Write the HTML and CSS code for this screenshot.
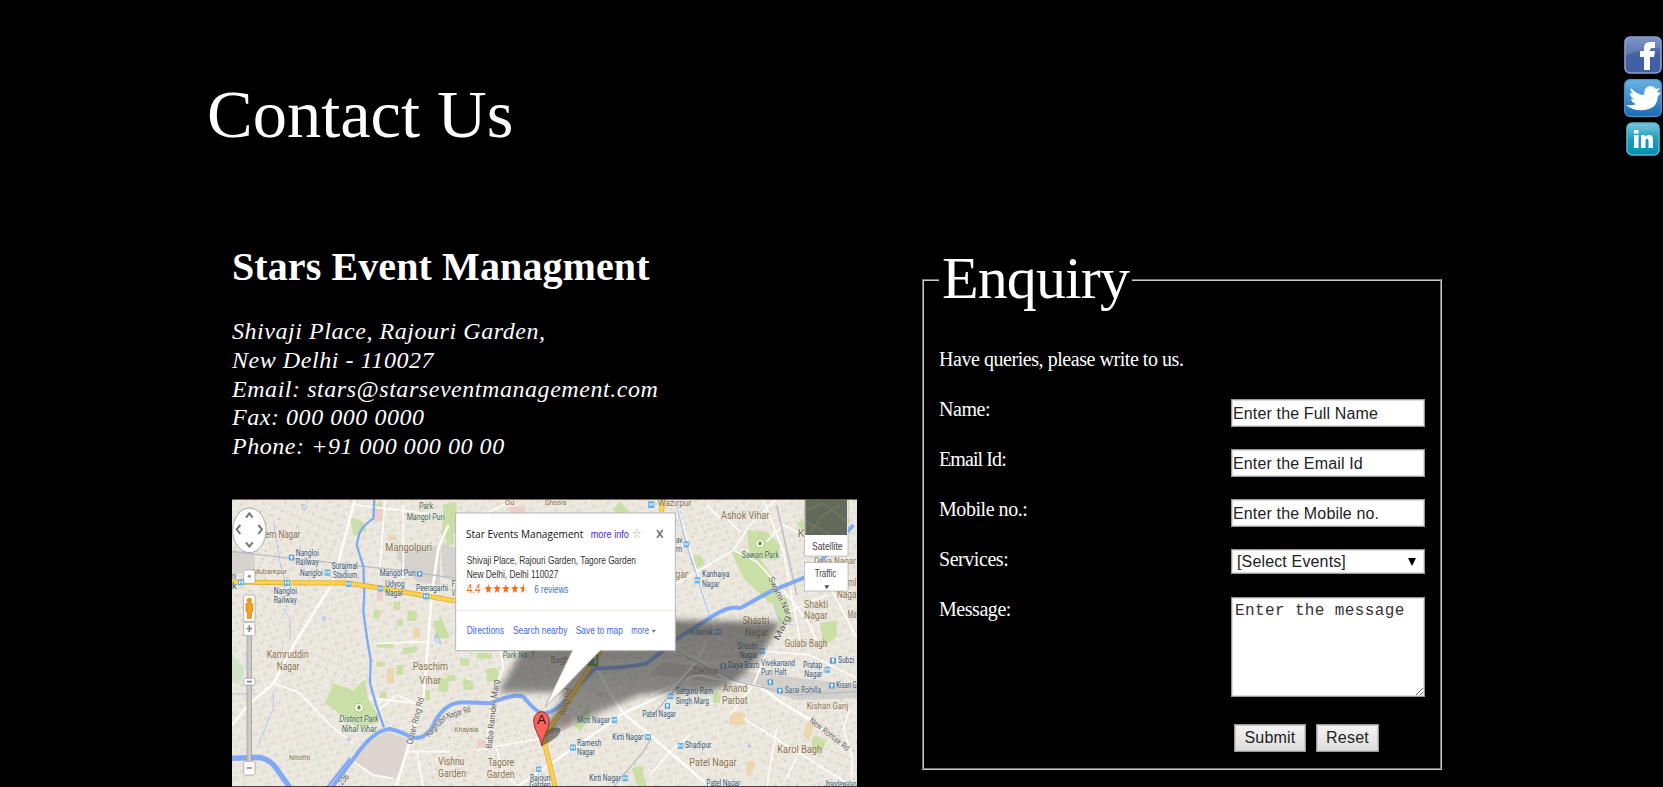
FILE: index.html
```html
<!DOCTYPE html>
<html lang="en">
<head>
<meta charset="utf-8">
<title>Contact Us</title>
<link rel="stylesheet" href="styles.css">
</head>
<body>
<div class="page">
<main class="main">
  <h1 class="title">Contact Us</h1>
  <div class="columns">
    <section class="contact">
      <h2 class="company">Stars Event Managment</h2>
      <address class="address">Shivaji Place, Rajouri Garden,<br>New Delhi - 110027<br>Email: stars@starseventmanagement.com<br>Fax: 000 000 0000<br>Phone: +91 000 000 00 00</address>
      <svg class="map" viewBox="6 12 1875 864" preserveAspectRatio="none">
        <defs>
          <pattern id="blocks" width="46" height="38" patternUnits="userSpaceOnUse" patternTransform="rotate(-14)">
            <path d="M0 6H46M0 24H30M8 0V38M27 6V38M38 0V24" stroke="#f2efe7" stroke-width="2.5" fill="none"/>
            <path d="M12 10h11v9H12zM30 27h12v8H30z" fill="#e2ddd2"/>
          </pattern>
          <pattern id="dense" width="30" height="26" patternUnits="userSpaceOnUse" patternTransform="rotate(22)">
            <path d="M0 5H30M0 17H30M6 0V26M19 0V17" stroke="#edeae2" stroke-width="2.5" fill="none"/>
            <path d="M9 8h8v7H9z" fill="#dad5ca"/>
          </pattern>
          <linearGradient id="shade" x1="0" x2="0" y1="0" y2="1"><stop offset="0" stop-color="#3a3a3a" stop-opacity=".66"/><stop offset="1" stop-color="#3a3a3a" stop-opacity=".5"/></linearGradient>
          <filter id="soft" x="-10%" y="-20%" width="120%" height="140%"><feGaussianBlur stdDeviation="9"/></filter>
          <symbol id="metro" viewBox="0 0 20 20"><rect width="20" height="20" rx="3" fill="#5fb0ea"/><path d="M5 15V5l5 6 5-6v10" stroke="#fff" stroke-width="2.6" fill="none"/></symbol>
          <symbol id="rail" viewBox="0 0 20 20"><rect width="20" height="20" rx="3" fill="#4b9ade"/><rect x="6" y="3" width="8" height="11" rx="2" fill="#fff"/><path d="M7 17h6" stroke="#fff" stroke-width="2"/></symbol>
          <symbol id="park" viewBox="0 0 28 28"><circle cx="14" cy="14" r="13" fill="#fff" stroke="#7a9c5b" stroke-width="1.5"/><path d="M14 6c7 6 7 13 0 13s-7-7 0-13zM13 18h2v4h-2z" fill="#5ba416"/></symbol>
        </defs>
        <rect x="6" y="12" width="1875" height="864" fill="#e9e5dc"/>
        <rect x="6" y="12" width="1875" height="864" fill="url(#blocks)"/>
        <path d="M6 12H370L330 260 200 435 6 500ZM150 470 400 440 420 560 300 570 280 630 330 700 220 640 160 600ZM630 700H940V876H600ZM1300 30 1600 30 1500 230 1350 330ZM1600 650 1881 600V876H1590Z" fill="url(#dense)"/>
        <path d="M6 165 75 175V225L6 240ZM500 165 630 150V270L560 260 500 190ZM630 140 677 160V260L640 250Z" fill="#d6d3ce"/>
        <path d="M360 800 400 750 470 710 540 735 500 850 430 840Z" fill="#dcd5d0"/>
        <path d="M1300 500 1881 570V610L1700 615 1560 570 1260 540Z" fill="#c9c7c4" opacity=".7"/>
        <g fill="#c9dfa6">
          <path d="M310 565 370 585 405 553 415 615 445 660 440 685 380 695 285 625Z"/>
          <path d="M360 65 400 80 410 105 370 125ZM430 30 455 20 460 45 430 60Z"/>
          <path d="M490 320h20v25h-20zM535 345l25 5v28h-30zM430 345h20v25h-20zM610 380l25-10 25 60h-40zM500 375h18v18h-18zM440 440h50v18h-50zM520 460l40-8v18l-40 10zM440 500h25v15h-25zM500 510h20v30h-20zM575 580l25 5v30h-25zM625 550h30v40h-30zM450 590h20v20h-20z"/>
          <path d="M640 30l40-10v90l-45 30zM650 120h22v30h-22zM690 490h28v22h-28zM740 475h45v16h-45zM770 520h35v40h-35zM700 550l30 10v25h-30zM650 540h25v18h-25zM1150 40l20-20 30 30-40 8z"/>
          <path d="M1500 160 1590 190 1650 280 1625 330 1540 250ZM1550 105 1610 110 1650 150 1640 195 1560 190ZM1625 300 1670 310 1690 380 1650 390ZM1380 190l30-12 15 30-30 14zM1770 385l50-10v50l-40 30zM1700 85l20-10 30 60-20-10zM1300 265l35-15v30l-35 25zM1750 720l38 15-15 45-30-20z"/>
          <path d="M1450 590l20 6v28h-20zM1030 690l45-60 5 35-30 45zM1205 820l30-8 15 64h-28zM830 440l90 10v15h-90z"/>
        </g>
        <path d="M6 480 45 520 30 570 6 555Z" fill="#cfe3cb"/>
        <g fill="#edcfcb"><path d="M432 40h30v38h-30zM440 290l18-8v35h-18zM740 735h28v25h-28zM995 665l25-12 5 40-30 15zM840 35h45v30h-45zM1100 590h35v15h-35z"/></g>
        <g fill="#edd6ad"><path d="M475 120h25v15h-25zM550 395l20 8v25h-20zM470 520h22v45h-22zM1300 130l30 8-8 22-25-5zM1500 650l45 5v35h-45zM1555 795l22 8-15 40-15-8zM1730 680l22 14-15 40-18-12z"/></g>
        <g class="street">
          <path d="M6 690 60 625 130 565 200 435 310 260 375 12" class="wide"/>
          <path d="M130 565 210 595 300 690 370 745M440 650 500 600 560 625M420 610 570 625M355 790 430 840 490 850"/>
          <path d="M655 90 625 160 605 300 595 430 580 610 545 720 500 870" class="wide"/>
          <path d="M440 630 460 610M380 30 630 60M520 30V250M465 12 450 220M600 440 440 445M530 770H660M560 770 580 876"/>
          <path d="M700 80 760 60 830 25M810 450 820 520 790 590 775 700 770 765M740 765 930 730 1000 710M800 760 820 840 870 876"/>
          <path d="M860 876 1000 780 1110 705 1180 655 1320 590 1400 500 1430 440" class="wide"/>
          <path d="M1100 520 1150 610 1180 655 1260 720 1440 876" class="wide"/>
          <path d="M1260 600 1400 540 1500 560 1590 575 1650 620 1750 680 1850 770M1260 450 1400 490 1500 560" class="wide"/>
          <path d="M1340 30 1445 380 1470 435M1260 300 1350 260 1510 165 1560 90 1640 12"/>
          <path d="M1510 165 1580 200 1680 310 1740 390 1760 440M1610 140 1660 90 1720 120 1881 430M1600 12 1660 170 1710 435M1680 350 1740 320 1790 300M1480 60 1530 110M1430 30 1470 70"/>
          <path d="M1620 450 1570 570 1500 660M1260 840 1320 770 1380 720M1540 670 1700 770 1870 876M1640 700 1610 876M1720 745 1670 850M1860 640 1840 700 1865 780V876M1600 468 1740 480 1881 550"/>
        </g>
        <g class="rail"><path d="M6 170 320 205 500 225 680 250M1260 670 1320 600 1400 510M1881 590 1700 600 1520 560 1300 450M1150 876 1240 770 1260 735M1640 30 1700 300"/></g>
        <g class="water">
          <path d="M433 12 430 70Q395 95 388 115L380 150 400 215 403 290 400 350 412 435 422 495 420 565 440 635 462 697" stroke-width="7"/>
          <path d="M0 790 90 787Q120 795 135 815L185 885" stroke-width="16"/>
          <path d="M300 885 375 785Q430 705 480 702 515 710 545 728 580 735 605 700 640 620 700 622L780 625Q850 595 880 605 925 660 945 655 980 650 1010 610L1095 520Q1180 520 1250 505 1310 460 1340 432L1445 365Q1500 330 1530 340L1620 290 1730 245 1870 90" stroke-width="12"/>
          <path d="M360 790 285 885" stroke-width="7"/>
          <path d="M1340 30 1370 150 1445 380" stroke-width="4" opacity=".6"/>
          <path d="M1630 320Q1640 390 1690 390M130 80 150 200 165 260M160 340 180 370V435M130 590V640L85 750M6 597H85" stroke-width="3" opacity=".5"/>
          <path d="M215 28l14 3-2 12-9-4zM275 367l10-2 2 9-8 2zM618 415l15 30-18-8zM350 730l12 4-4 6zM1555 750h6v6h-6z" fill="#5e98f2" stroke-width="2"/>
        </g>
        <path d="M6 261 160 263 350 264 455 280 590 303 700 322M1130 440 1090 500 1010 625 945 720 945 750 978 885M1300 12 1294 50" class="hwy-edge"/>
        <path d="M6 261 160 263 350 264 455 280 590 303 700 322M1130 440 1090 500 1010 625 945 720 945 750 978 885M1300 12 1294 50" class="hwy"/>
        <rect x="1073" y="466" width="32" height="48" rx="5" fill="#5c913a"/><text x="1086" y="506" class="t" fill="#fff" font-size="32">1</text>

        <g class="t place">
          <text x="105" y="128" textLength="106">em Nagar</text><text x="466" y="168" textLength="140">Mangolpuri</text>
          <text x="68" y="236" textLength="103" font-size="24">Mubarkpur</text>
          <text x="110" y="490" textLength="126">Kamruddin</text><text x="140" y="526" textLength="68">Nagar</text>
          <text x="548" y="525" textLength="106">Paschim</text><text x="568" y="566" textLength="65">Vihar</text>
          <text x="177" y="794" textLength="63" font-size="23">Nilothi</text>
          <text x="625" y="810" textLength="78">Vishnu</text><text x="624" y="845" textLength="84">Garden</text>
          <text x="673" y="710" textLength="72" font-size="22">Khayala</text>
          <text x="773" y="813" textLength="79">Tagore</text><text x="770" y="848" textLength="84">Garden</text>
          <text x="945" y="30" textLength="64" font-size="22">Gheora</text><text x="825" y="30" textLength="28" font-size="22">Ou</text>
          <text x="962" y="504" textLength="54" font-size="27">Bagh</text>
          <text x="1283" y="32" textLength="102" font-size="26">Wazirpur</text><text x="1473" y="71" textLength="145">Ashok Vihar</text>
          <text x="1336" y="250" textLength="38">gar</text><text x="1703" y="127">K</text>
          <text x="1538" y="388" textLength="80">Shastri</text><text x="1545" y="423" textLength="69">Nagar</text>
          <text x="1722" y="340" textLength="72">Shakti</text><text x="1722" y="373" textLength="70">Nagar</text>
          <text x="1752" y="206" textLength="126" font-size="25">Daya Nagar</text><text x="1853" y="272" textLength="26">ml</text><text x="1820" y="309" textLength="60">Naga</text><text x="1853" y="368" textLength="27">Ma</text>
          <text x="1664" y="457" textLength="127">Gulabi Bagh</text><text x="1388" y="536" textLength="74" font-size="26">Zakhira</text>
          <text x="1478" y="591" textLength="74">Anand</text><text x="1476" y="627" textLength="77">Parbat</text>
          <text x="1730" y="641" textLength="125" font-size="27">Kishan Ganj</text><text x="1642" y="774" textLength="134">Karol Bagh</text>
          <text x="1378" y="813" textLength="142">Patel Nagar</text>
        </g>
        <g class="t green">
          <text x="567" y="42" textLength="42">Park</text><text x="530" y="75" textLength="114">Mangol Puri</text>
          <text x="328" y="682" textLength="118" font-style="italic">District Park</text><text x="335" y="711" textLength="105" font-style="italic">Nihal Vihar</text>
          <text x="818" y="489" textLength="96" font-style="italic">Park No. 1</text><text x="1535" y="189" textLength="112">Sawan Park</text>
        </g>
        <g class="t station">
          <text x="197" y="183" textLength="69">Nangloi</text><text x="197" y="209" textLength="69">Railway</text><text x="210" y="242" textLength="68">Nangloi</text>
          <text x="305" y="221" textLength="78">Surajmal</text><text x="309" y="248" textLength="73">Stadium</text>
          <text x="131" y="298" textLength="70">Nangloi</text><text x="131" y="325" textLength="69">Railway</text>
          <text x="449" y="244" textLength="108">Mangol Puri</text><text x="466" y="276" textLength="58">Udyog</text><text x="466" y="302" textLength="53">Nagar</text>
          <text x="558" y="287" textLength="96">Peeragarhi</text><text x="6" y="253" textLength="13">ni</text><text x="6" y="281">k</text><text x="665" y="276" textLength="10">F</text><text x="665" y="303" textLength="10">V</text>
          <text x="1042" y="683" textLength="97">Moti Nagar</text><text x="1041" y="754" textLength="73">Ramesh</text><text x="1041" y="781" textLength="53">Nagar</text>
          <text x="1147" y="734" textLength="93">Kirti Nagar</text><text x="1078" y="857" textLength="94">Kirti Nagar</text><text x="900" y="857" textLength="61">Rajouri</text><text x="898" y="878" textLength="64">Garden</text>
          <text x="1237" y="666" textLength="101">Patel Nagar</text><text x="1416" y="247" textLength="82">Kanhaiya</text><text x="1416" y="277" textLength="52">Nagar</text>
          <text x="1381" y="420" textLength="68">Inderlok</text><text x="1337" y="143" textLength="20">av</text><text x="1338" y="171" textLength="18">m</text>
          <text x="1521" y="461" textLength="62">Shastri</text><text x="1530" y="488" textLength="53">Nagar</text><text x="1494" y="520" textLength="94">Daya Basti</text>
          <text x="1593" y="514" textLength="102">Vivekanand</text><text x="1593" y="541" textLength="76">Puri Halt</text><text x="1719" y="518" textLength="58">Pratap</text><text x="1723" y="546" textLength="54">Nagar</text>
          <text x="1824" y="503" textLength="48">Subzi</text><text x="1819" y="579" textLength="61">Kisan G</text><text x="1664" y="594" textLength="109">Sarai Rohilla</text>
          <text x="1337" y="598" textLength="112">Satguru Ram</text><text x="1337" y="626" textLength="100">Singh Marg</text><text x="1365" y="760" textLength="79">Shadipur</text><text x="1429" y="872" textLength="102">Patel Nagar</text><text x="1782" y="875" textLength="98">Jhandewalan</text>
        </g>
        <g class="t road">
          <text transform="translate(547 750) rotate(-76)" textLength="145">Outer Ring Rd</text>
          <text transform="translate(597 728) rotate(-47)" textLength="80">Raghubir</text><text transform="translate(652 672) rotate(-17)" textLength="74">Nagar Rd</text>
          <text transform="translate(785 762) rotate(-84)" textLength="208">Baba Ramdev Marg</text><text transform="translate(336 872) rotate(-48)" textLength="34">236</text>
          <text transform="translate(1005 663) rotate(-76)" fill="#a1701c" textLength="83">Ring Rd</text>
          <text transform="translate(1614 250) rotate(64)" textLength="125">Swami Nar</text><text transform="translate(1646 438) rotate(-64)" textLength="80">Marg</text>
          <text transform="translate(1736 680) rotate(38)" textLength="145">New Rohtak Rd</text>
        </g>
        <g>
          <use href="#rail" x="176" y="178" width="17" height="20"/><use href="#metro" x="283" y="222" width="19" height="22"/><use href="#metro" x="24" y="251" width="18" height="22"/><use href="#metro" x="162" y="253" width="18" height="22"/><use href="#metro" x="347" y="256" width="18" height="22"/><use href="#metro" x="443" y="270" width="17" height="22"/><use href="#rail" x="561" y="227" width="16" height="20"/><use href="#metro" x="579" y="293" width="18" height="22"/>
          <use href="#metro" x="1144" y="664" width="18" height="22"/><use href="#metro" x="1245" y="715" width="18" height="22"/><use href="#metro" x="1019" y="747" width="19" height="22"/><use href="#metro" x="918" y="812" width="17" height="22"/><use href="#metro" x="1177" y="839" width="18" height="22"/><use href="#metro" x="1254" y="18" width="20" height="22"/>
          <use href="#metro" x="1360" y="137" width="18" height="22"/><use href="#metro" x="1393" y="245" width="18" height="22"/><use href="#metro" x="1454" y="401" width="20" height="20"/><use href="#metro" x="1588" y="458" width="18" height="20"/><use href="#rail" x="1471" y="504" width="18" height="20"/><use href="#metro" x="1783" y="514" width="18" height="20"/><use href="#rail" x="1800" y="486" width="18" height="22"/><use href="#rail" x="1797" y="561" width="17" height="22"/><use href="#rail" x="1612" y="552" width="17" height="20"/><use href="#rail" x="1641" y="576" width="17" height="22"/><use href="#metro" x="1314" y="593" width="17" height="22"/><use href="#rail" x="1304" y="622" width="17" height="22"/><use href="#metro" x="1343" y="742" width="18" height="22"/>
          <use href="#park" x="373" y="622" width="28" height="32"/><use href="#park" x="1576" y="128" width="28" height="34"/>
        </g>
        <path d="M805 592 890 440 1320 375 1649 382Q1560 570 1440 588L1230 600 950 720 940 700 1010 592Z" fill="url(#shade)" filter="url(#soft)"/>

        <!-- pan and zoom controls -->
        <rect x="51" y="420" width="14" height="390" fill="#c9c9c9" stroke="#999" stroke-width="2"/>
        <ellipse cx="58" cy="106" rx="50" ry="67" fill="#fff" stroke="#aaa" stroke-width="3"/>
        <path d="M48 68 58 55 68 68M48 142 58 155 68 142M31 90 20 103 31 117M85 90 96 103 85 117" fill="none" stroke="#777" stroke-width="6"/>
        <g fill="#fff" stroke="#999" stroke-width="2"><rect x="41" y="225" width="34" height="40" rx="4"/><rect x="41" y="300" width="34" height="80" rx="4"/><rect x="41" y="382" width="34" height="40" rx="4"/><rect x="41" y="550" width="34" height="20" rx="4"/><rect x="41" y="799" width="34" height="41" rx="4"/></g>
        <circle cx="58" cy="244" r="5" fill="#999"/><path d="M50 401H66M58 391V411M50 560H66M50 819H66" stroke="#888" stroke-width="5"/>
        <circle cx="58" cy="316" r="8" fill="#e99a10"/><path d="M48 325H68V350H64V370H52V350H48Z" fill="#f1a519" stroke="#c87509" stroke-width="2"/>
        <rect x="1723" y="12" width="131" height="171" fill="#fff" stroke="#aaa" stroke-width="2"/><rect x="1726" y="12" width="125" height="108" fill="#626a59"/>
        <path d="M1726 45 1780 25 1851 80M1740 110 1780 60 1830 30M1726 80 1800 118" stroke="#8c8a74" stroke-width="6" opacity=".35" fill="none"/>
        <rect x="1723" y="202" width="131" height="86" fill="#fff" stroke="#aaa" stroke-width="2"/>
        <g class="arial" fill="#444" font-size="33"><text x="1746" y="164" textLength="92">Satellite</text><text x="1754" y="245" textLength="65">Traffic</text></g><path d="M1783 271H1798L1790 283Z" fill="#555"/>

        <!-- info bubble -->
        <path d="M677 54H1336V467H1110L945 637 1027 467H677Z" fill="#fff" stroke="#b5b5b5" stroke-width="3"/>
        <text x="708" y="130" class="open" font-size="34" fill="#111" textLength="352">Star Events Management</text>
        <g class="arial">
          <text x="1082" y="128" fill="#4a2ad0" font-size="33" textLength="115">more info</text><text x="1205" y="130" fill="#aaa" font-size="40" font-family="DejaVu Sans" textLength="30">☆</text>
          <text x="710" y="207" fill="#333" font-size="31" textLength="508">Shivaji Place, Rajouri Garden, Tagore Garden</text><text x="710" y="248" fill="#333" font-size="31" textLength="275">New Delhi, Delhi 110027</text>
          <text x="710" y="293" fill="#ed6b24" font-size="36" textLength="42">4.4</text><text x="762" y="293" fill="#f1690d" font-size="38" font-family="DejaVu Sans" textLength="132">★★★★★</text><rect x="882" y="262" width="14" height="36" fill="#fff" opacity=".8"/>
          <text x="913" y="293" fill="#3d68d8" font-size="31" textLength="102">6 reviews</text>
          <g fill="#3d68d8" font-size="33"><text x="710" y="418" textLength="112">Directions</text><text x="849" y="418" textLength="163">Search nearby</text><text x="1037" y="418" textLength="142">Save to map</text><text x="1204" y="418" textLength="53">more</text></g>
        </g>
        <path d="M1265 404H1278L1271 413Z" fill="#777"/><path d="M678 346H1335" stroke="#e8e8df" stroke-width="3"/><path d="M1281 105 1298 128M1298 105 1281 128" stroke="#777" stroke-width="5"/>
        <path d="M935 753 945 715Q965 690 990 700 1000 715 960 740Z" fill="#333" opacity=".55"/>
        <path d="M935 753C932 725 911 705 911 674A24 30 0 0 1 958 674C958 705 938 725 935 753Z" fill="#f4645b" stroke="#9a2b28" stroke-width="3"/><text x="921" y="688" class="arial" font-size="38" fill="#211" textLength="27">A</text>
        <path d="M6 13H1881" stroke="#6b5232" stroke-width="3"/><path d="M6 875H1881" stroke="#444" stroke-width="4"/>
      </svg>
    </section>

    <form class="enquiry">
      <fieldset class="box">
        <legend class="legend">Enquiry</legend>
        <p class="intro">Have queries, please write to us.</p>
        <div class="row"><label for="name">Name:</label><input class="field" id="name" value="Enter the Full Name"></div>
        <div class="row"><label class="tight" for="email">Email Id:</label><input class="field" id="email" value="Enter the Email Id"></div>
        <div class="row"><label for="mobile">Mobile no.:</label><input class="field" id="mobile" value="Enter the Mobile no."></div>
        <div class="row"><label for="services">Services:</label>
          <div class="select" id="services"><span>[Select Events]</span><svg width="8" height="8" viewBox="0 0 8 8"><path d="M0 0H8L4 8Z"/></svg></div></div>
        <div class="row row-message"><label for="message">Message:</label><textarea class="message" id="message">Enter the message</textarea></div>
        <div class="actions"><button class="button submit" type="button">Submit</button><button class="button reset" type="button">Reset</button></div>
      </fieldset>
    </form>
  </div>
</main>
<aside class="social">
  <svg class="badge" viewBox="0 0 38 38"><defs><linearGradient id="fb" x2="0" y2="1"><stop stop-color="#6d86bd"/><stop offset=".5" stop-color="#4461a1"/><stop offset="1" stop-color="#3f5fa7"/></linearGradient></defs><rect x="1" y="1" width="36" height="36" rx="5" fill="url(#fb)" stroke="#8ba0cf" stroke-width="1.6"/><path d="M2 5Q2 2 6 2H32Q36 2 36 6V12Q16 12 2 20Z" fill="#fff" opacity=".13"/><path d="M20 34V21H16V15H20V12Q20 6 26 6H31V12H28Q26 12 26 14V15H31L30 21H26V34Z" fill="#fff"/></svg>
  <svg class="badge" viewBox="0 0 38 38"><defs><linearGradient id="tw" x2="0" y2="1"><stop stop-color="#68b3e3"/><stop offset="1" stop-color="#1b6bb5"/></linearGradient></defs><rect x=".7" y=".7" width="36.6" height="36.6" rx="5" fill="url(#tw)" stroke="#4c98cf" stroke-width="1.2"/><path d="M7 9Q13 16 20 16Q20 7 27 7Q30 7 32 10L36 9 33 13 37 14 34 17Q33 28 25 30Q12 34 2 26Q8 27 12 25Q8 24 7 20H10Q6 18 6 14L9 15Q6 12 7 9Z" fill="#fff"/></svg>
  <svg class="badge badge-small" viewBox="0 0 34 34"><defs><linearGradient id="li" x2="0" y2="1"><stop stop-color="#7bc8dc"/><stop offset=".5" stop-color="#1e9dbd"/><stop offset="1" stop-color="#078eb2"/></linearGradient></defs><rect x="1" y="1" width="32" height="32" rx="5" fill="url(#li)" stroke="#58b7d0" stroke-width="1.6"/><path d="M8 13H12.500V26H8ZM8 8H12.500V11.500H8ZM15 13H19V15Q21 12.500 24 13Q27 13.500 27 18V26H22.500V19Q22.500 16.500 21 16.500Q19.500 16.500 19.500 19V26H15Z" fill="#fff"/></svg>
</aside>
</div>
<script src="map.js"></script>
</body>
</html>
```
FILE: map.js
```js
// Condense the glyphs of every map label to its given length.
document.querySelectorAll('.map text[textLength]').forEach(function (label) {
  label.setAttribute('lengthAdjust', 'spacingAndGlyphs');
});
```
FILE: styles.css
```css
* { box-sizing: border-box; }
body { margin: 0; background: #000; color: #fff; font-family: "Liberation Serif", "Times New Roman", serif; }
.page { display: flex; height: 787px; overflow: hidden; }
.main { flex: 1; padding-top: 74px; }
.title { margin: 0 0 0 207px; font-size: 68.5px; font-weight: 400; line-height: 80px; }
.columns { display: flex; gap: 65px; padding: 89px 0 0 232px; }
.contact { width: 625px; }
.company { margin: 0; padding-top: 1px; font-size: 40px; line-height: 46px; letter-spacing: .1px; white-space: nowrap; }
.address { margin-top: 27px; font-size: 24px; line-height: 28.8px; letter-spacing: .55px; font-style: italic; }
.map { display: block; width: 625px; height: 288px; margin-top: 38px; }

.street path { fill: none; stroke: #fdfcf8; stroke-width: 5; }
.street .wide { stroke-width: 8; }
.rail path { fill: none; stroke: #b9bdc3; stroke-width: 4; }
.water path { fill: none; stroke: #80aaf6; stroke-linejoin: round; }
.hwy-edge { fill: none; stroke: #dfa530; stroke-width: 15; stroke-linejoin: round; }
.hwy { fill: none; stroke: #fbd24f; stroke-width: 11; stroke-linejoin: round; }
.t { font-family: Roboto, sans-serif; }
.place { font-size: 33px; fill: #8a7350; }
.green { font-size: 29px; fill: #3c6a50; }
.station { font-size: 28px; fill: #315779; }
.road { font-size: 26px; fill: #666; }
.place, .green, .station, .road { stroke: #f4f1ea; stroke-width: 3px; stroke-opacity: .55; paint-order: stroke; }
.arial { font-family: "Liberation Sans", Arial, sans-serif; }
.open { font-family: "Open Sans", sans-serif; }

.enquiry { width: 520px; }
.box { margin: 0; height: 527px; padding: 0 15px; border: 2px groove #c8c8c8; }
.legend { height: 73px; padding: 0 3px; font-size: 60px; line-height: 71px; letter-spacing: -.9px; }
.intro { margin: 31px 0 0; height: 50px; }
.intro, .row { font-size: 20px; line-height: 24px; letter-spacing: -.45px; }
.tight { letter-spacing: -.9px; }
.row { display: flex; justify-content: space-between; align-items: flex-start; height: 50px; }
.field, .select, .message { border: 1px solid #999; box-shadow: inset 0 0 0 1px #ddd; }
.field, .select { width: 194px; margin: 2px 0 0; background: #fff; color: #222; font: 16px "Liberation Sans", Arial, sans-serif; letter-spacing: .15px; }
.field { height: 28px; padding: 1px 0 0 1px; }
.select { display: flex; align-items: center; justify-content: space-between; height: 25px; padding: 1px 8px 0 5px; }
.row-message { height: 100px; }
.message { width: 194px; height: 100px; margin: 0; padding: 4px 3px; background: #fff; color: #333; font: 16px "Liberation Mono", "Courier New", monospace; letter-spacing: .38px; resize: both; overflow: hidden; }
.actions { display: flex; gap: 10px; padding: 27px 0 0 295px; }
.button { height: 28px; padding: 0; border: 1px solid #999; box-shadow: inset 0 0 0 1px #ccc; background: linear-gradient(#f5f5f5, #ddd); color: #222; font: 16px "Liberation Sans", Arial, sans-serif; letter-spacing: .2px; }
.submit { width: 72px; }
.reset { width: 63px; }

.social { display: flex; flex-direction: column; align-items: center; width: 39px; padding: 36px 1px 0 0; gap: 5px; }
.badge { width: 38px; height: 38px; }
.badge-small { width: 34px; height: 34px; }
```
